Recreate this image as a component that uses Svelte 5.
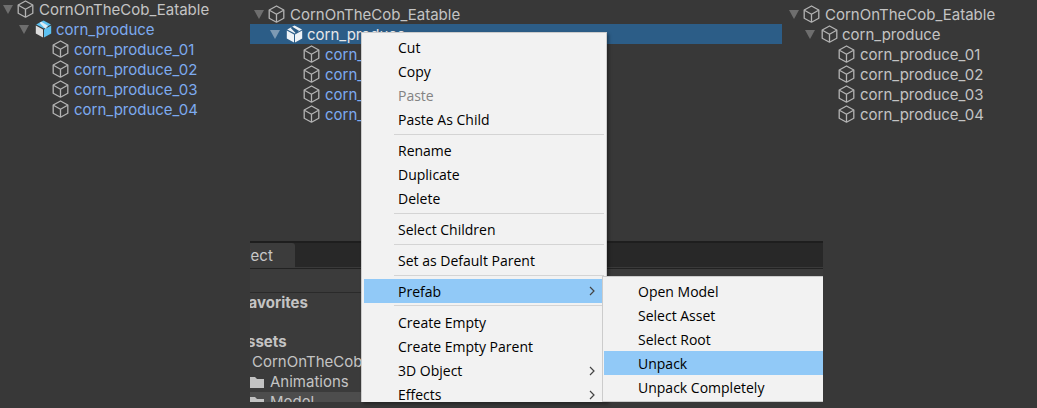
<script>
  const kids = ['corn_produce_01', 'corn_produce_02', 'corn_produce_03', 'corn_produce_04'];
  const menu = [
    { t: 'Cut' }, { t: 'Copy' }, { t: 'Paste', off: true }, { t: 'Paste As Child' }, { sep: 'a' },
    { t: 'Rename' }, { t: 'Duplicate' }, { t: 'Delete' }, { sep: 'a' },
    { t: 'Select Children' }, { sep: 'a' },
    { t: 'Set as Default Parent' }, { sep: 'b' },
    { t: 'Prefab', more: true, hot: true }, { sep: 'c' },
    { t: 'Create Empty' }, { t: 'Create Empty Parent' }, { t: '3D Object', more: true }, { t: 'Effects', more: true }
  ];
  const sub = [
    { t: 'Open Model' }, { t: 'Select Asset' }, { t: 'Select Root' }, { t: 'Unpack', hot: true }, { t: 'Unpack Completely' }
  ];
</script>

{#snippet arrow()}
  <svg class="arrow" width="10" height="9" viewBox="0 0 10 9"><polygon points="0,0 10,0 5,9" /></svg>
{/snippet}

{#snippet cube()}
  <svg class="cube" width="17" height="18" viewBox="0 0 17 18" fill="none" stroke-width="1.3" stroke-linejoin="round">
    <path d="M8.5 1 15.8 5v8.2L8.5 17.2 1.2 13.2V5Z" />
    <path d="M1.4 5.2 8.5 9.2 15.6 5.2M8.5 9.2V17" />
  </svg>
{/snippet}

{#snippet box()}
  <svg class="box" width="17" height="18" viewBox="0 0 17 18">
    <path class="top" d="M8.5.6 16 4.6 8.9 8.6 1.2 4.6Z" />
    <path class="tape" d="M4.6 2.7 6.4 1.8 13.2 5.9 11.6 6.9V9.6L10 8.6Z" />
    <path class="left" d="M.8 5.6 8 9.6V17.6L.8 13.6Z" />
    <path class="right" d="M9 9.6 16.2 5.6V13.6L9 17.6Z" />
  </svg>
{/snippet}

{#snippet tree(off, sel, blueRoot, blueKids)}
  <div class="tree {off}">
    <div class="row d0">{@render arrow()}{@render cube()}<span>CornOnTheCob_Eatable</span></div>
    <div class="row d1" class:sel class:blue={blueRoot}>
      {@render arrow()}
      {#if blueRoot || sel}{@render box()}{:else}{@render cube()}{/if}
      <span>corn_produce</span>
    </div>
    {#each kids as k}
      <div class="row d2" class:blue={blueKids}>{@render cube()}<span>{k}</span></div>
    {/each}
  </div>
{/snippet}

<div class="page">
  <div class="top">
    <div class="panel left">{@render tree('o0', false, true, true)}</div>
    <div class="panel mid">{@render tree('o1', true, false, true)}</div>
    <div class="panel right">{@render tree('o4', false, false, false)}</div>
  </div>

  <div class="bottom">
    <section class="project">
      <div class="tabs">
        <div class="tab"><span>Project</span></div>
      </div>
      <div class="toolbar"></div>
      <div class="side">
        <div class="head fav">Favorites</div>
        <div class="head assets">Assets</div>
        <div class="item root">CornOnTheCob_Eatable</div>
        <div class="item folder">
          <svg width="14" height="12" viewBox="0 0 14 12"><path d="M0 1h5l2 2h7v9H0Z" /></svg>Animations
        </div>
        <div class="item folder picked">
          <svg width="14" height="12" viewBox="0 0 14 12"><path d="M0 1h5l2 2h7v9H0Z" /></svg>Model
        </div>
      </div>
    </section>
  </div>

  <div class="menu main">
    {#each menu as m}
      {#if m.sep}
        <div class="sep {m.sep}"><i></i></div>
      {:else}
        <div class="mi" class:off={m.off} class:hot={m.hot}>
          {m.t}
          {#if m.more}
            <svg class="chev" width="6" height="10" viewBox="0 0 6 10" fill="none"><path d="M1 1l4 4-4 4" /></svg>
          {/if}
        </div>
      {/if}
    {/each}
  </div>

  <div class="menu submenu">
    {#each sub as m}
      <div class="mi" class:hot={m.hot}>{m.t}</div>
    {/each}
  </div>
</div>

<style>
  :global(body) { margin: 0; background: #383838; }
  .page {
    position: relative;
    width: 1037px;
    height: 408px;
    overflow: hidden;
    background: #383838;
    font-family: Inter, "Liberation Sans", sans-serif;
    font-size: 15px;
    color: #c4c4c4;
  }
  .top { display: flex; height: 241px; }
  .panel { min-width: 0; overflow: hidden; }
  .left { width: 250px; }
  .mid { width: 532px; }
  .right { width: 255px; }

  .tree { padding-top: 4px; }
  .o0 { --off: 0px; margin-top: -5px; }
  .o1 { --off: 1px; }
  .o4 { --off: 4px; }
  .row { display: flex; align-items: center; height: 20px; white-space: nowrap; }
  .row span { margin-left: 5px; }
  .d0 { padding-left: calc(var(--off) + 3px); }
  .d1 { padding-left: calc(var(--off) + 19px); }
  .d1 span { margin-left: 4px; }
  .d2 { padding-left: calc(var(--off) + 52px); }
  .arrow { fill: #6e6e6e; margin-right: 4px; flex: none; }
  .d1 .arrow { margin-right: 6px; }
  .cube { stroke: #b4b4b4; flex: none; }
  .box { flex: none; }
  .box .top, .box .right { fill: #5cc1f1; }
  .box .left { fill: #dcdcdc; }
  .box .tape { fill: #dcecf5; }
  .blue { color: #7dabf0; }
  .sel { background: #2c5d87; color: #e8e8e8; }
  .sel .arrow { fill: #7d9ab4; }
  .sel .box .top, .sel .box .right, .sel .box .left { fill: #eef3f7; }
  .sel .box .tape { fill: #2c5d87; }

  .bottom { height: 161px; padding-left: 250px; }
  .project {
    width: 573px;
    height: 161px;
    overflow: hidden;
    background: #3b3b3b;
    border-top: 2px solid #1e1e1e;
    box-sizing: border-box;
  }
  .tabs { height: 24px; background: #282828; border-bottom: 1px solid #3a3a3a; }
  .tab { width: 45px; height: 25px; overflow: hidden; background: #3c3c3c; white-space: nowrap; border-top-right-radius: 3px; }
  .tab span { display: block; margin-left: -27px; line-height: 25px; color: #c8c8c8; }
  .toolbar { height: 23px; border-top: 1px solid #222; border-bottom: 1px solid #2a2a2a; background: #3b3b3b; }
  .side { white-space: nowrap; }
  .head { font-weight: 700; height: 20px; line-height: 20px; color: #c4c4c4; }
  .fav { margin: 0 0 0 -10px; padding-top: 0; }
  .assets { margin: 19px 0 0 -14px; }
  .item { height: 20px; line-height: 20px; }
  .root { padding-left: 2px; }
  .folder { display: flex; align-items: center; gap: 6px; }
  .folder svg { fill: #c2c2c2; flex: none; }
  .picked { background: #4d4d4d; }

  .menu {
    position: absolute;
    box-sizing: border-box;
    overflow: hidden;
    background: #f2f2f2;
    border: 1px solid #ccc;
    font-family: "Open Sans", "Noto Sans", sans-serif;
    font-size: 14px;
    color: #000;
    box-shadow: 2px 2px 3px rgba(0, 0, 0, 0.35);
  }
  .main { left: 361px; top: 32px; width: 246px; height: 370px; padding: 3px 2px 0; border-bottom: 0; }
  .submenu { left: 602px; top: 276px; width: 221px; height: 126px; padding: 2px 0 0 1px; border-right: 0; box-shadow: none; }
  .mi { position: relative; height: 24px; line-height: 24px; padding-left: 34px; white-space: nowrap; }
  .main .hot { line-height: 26px; }
  .submenu .mi { line-height: 26px; padding-left: 34px; }
  .hot { background: #91c9f7; }
  .off { color: #838383; }
  .chev { position: absolute; right: 9px; top: 7px; stroke: #444; stroke-width: 1.2; }
  .sep { display: flex; align-items: flex-start; padding: 2px 0 0 30px; box-sizing: border-box; }
  .sep i { display: block; width: 100%; height: 1px; background: #d4d4d4; }
  .sep.a { height: 7px; }
  .sep.b { height: 6px; }
  .sep.c { height: 8px; }
</style>
